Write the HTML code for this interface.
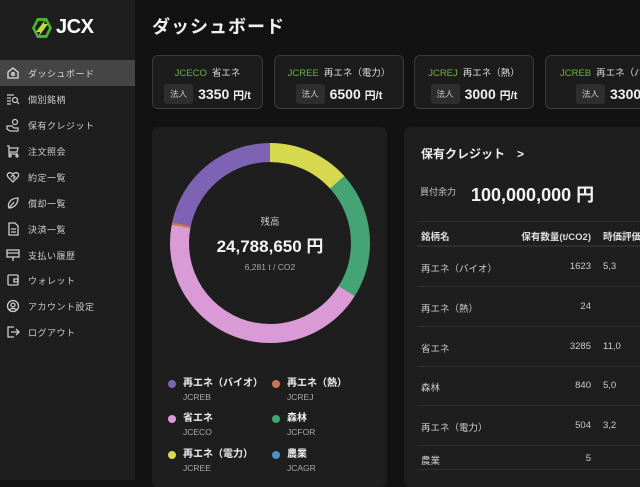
<!DOCTYPE html>
<html><head><meta charset="utf-8"><style>
*{margin:0;padding:0;box-sizing:border-box}
body{width:640px;height:480px;overflow:hidden;background:#121212;font-family:"Liberation Sans","Noto Sans CJK JP",sans-serif;color:#e6e6e6;position:relative}
.side{position:absolute;left:0;top:0;width:135px;height:480px;background:#1e1e1e}
.logo{position:absolute;left:31px;top:16px;display:flex;align-items:center}
.logo span{font-size:20px;font-weight:bold;color:#fff;margin-left:3px;letter-spacing:-0.5px}
.item{position:absolute;left:0;width:135px;height:26px;display:flex;align-items:center;font-size:9px;color:#ccc;letter-spacing:0.5px}
.item svg{position:absolute;left:6px}
.item span{position:absolute;left:28px}
.item.act{background:#454545;color:#ddd}
h1{position:absolute;left:152px;top:13px;font-size:18px;font-weight:bold;color:#f0f0f0;letter-spacing:1px}
.pc{position:absolute;top:55px;height:54px;border:1px solid #3a3a3a;border-radius:6px;background:#1c1c1c;text-align:center}
.pc .t{margin-top:9px;font-size:9.5px;color:#ddd}
.pc .t b{color:#6cb33f;font-weight:normal;margin-right:5px}
.pc .p{margin-top:5px;display:flex;justify-content:center;align-items:center}
.pc .p i{font-style:normal;background:#2e2e2e;font-size:8.5px;color:#ccc;padding:4px 6px;border-radius:3px;margin-right:5px}
.pc .p em{font-style:normal;font-size:14px;font-weight:bold;color:#f0f0f0}
.pc .p em small{font-size:11px}
.card{position:absolute;background:#1e1e1e;border-radius:6px}
.lg{position:absolute;font-size:10px;font-weight:bold;color:#eee}
.lg small{display:block;font-weight:normal;font-size:8.5px;color:#aaa;margin-top:3px}
.lg:before{content:"";position:absolute;left-15px;top:6px;width:8px;height:8px;border-radius:50%;background:var(--c)}
.lg:before{left:-15px}
.row{position:absolute;left:417px;width:230px;border-top:1px solid #2e2e2e;font-size:9.5px;color:#ccc}
.row .a{position:absolute;left:4px}
.row .b{position:absolute;right:56px}
.row .c{position:absolute;left:186px}
</style></head><body>
<div class="side">
 <div class="logo"><svg width="22" height="22" viewBox="0 0 22 22"><polygon points="6,1 16,1 21,11 16,21 6,21 1,11" fill="#4caf3a"/><polygon points="7.5,4 14.5,4 18,11 14.5,18 7.5,18 4,11" fill="#1e1e1e"/><polygon points="14,3 5,15 9,15 8,19 17,7 13,7" fill="#b8e03a"/></svg><span>JCX</span></div>
 <div class="item act" style="top:60px"><svg width="14" height="14" viewBox="0 0 14 14" fill="none" stroke="#ddd" stroke-width="1.3"><path d="M2 6L7 2L12 6V12H2Z"/><circle cx="7" cy="8" r="1.3"/></svg><span>ダッシュボード</span></div>
 <div class="item" style="top:86px"><svg width="14" height="14" viewBox="0 0 14 14" fill="none" stroke="#ccc" stroke-width="1.2"><path d="M1 3H8M1 6H5M1 9H5M1 12H5"/><circle cx="9" cy="8" r="2.5"/><path d="M11 10L13 12"/></svg><span>個別銘柄</span></div>
 <div class="item" style="top:112px"><svg width="14" height="14" viewBox="0 0 14 14" fill="none" stroke="#ccc" stroke-width="1.2"><circle cx="9" cy="4" r="2.5"/><path d="M1 8H6L8 10H12V13H4L1 11Z"/></svg><span>保有クレジット</span></div>
 <div class="item" style="top:138px"><svg width="14" height="14" viewBox="0 0 14 14" fill="none" stroke="#ccc" stroke-width="1.3"><path d="M1 2H3V10H12M3 4H12L11 8H3"/><circle cx="4" cy="12" r="1"/><circle cx="11" cy="12" r="1"/></svg><span>注文照会</span></div>
 <div class="item" style="top:164px"><svg width="14" height="14" viewBox="0 0 14 14" fill="none" stroke="#ccc" stroke-width="1.3"><path d="M7 12L2 7C0 4 3 1 7 4C11 1 14 4 12 7Z"/><path d="M5 7L7 5L9 7L7 9"/></svg><span>約定一覧</span></div>
 <div class="item" style="top:190px"><svg width="14" height="14" viewBox="0 0 14 14" fill="none" stroke="#ccc" stroke-width="1.3"><path d="M3 12C1 7 5 2 12 2C12 9 7 12 3 12ZM3 12L8 6"/></svg><span>償却一覧</span></div>
 <div class="item" style="top:216px"><svg width="14" height="14" viewBox="0 0 14 14" fill="none" stroke="#ccc" stroke-width="1.3"><path d="M3 1H9L12 4V13H3Z"/><path d="M5 7H10M5 10H10"/></svg><span>決済一覧</span></div>
 <div class="item" style="top:242px"><svg width="14" height="14" viewBox="0 0 14 14" fill="none" stroke="#ccc" stroke-width="1.3"><rect x="1" y="2" width="12" height="7"/><path d="M1 5H13M7 9V13"/></svg><span>支払い履歴</span></div>
 <div class="item" style="top:267px"><svg width="14" height="14" viewBox="0 0 14 14" fill="none" stroke="#ccc" stroke-width="1.3"><rect x="2" y="2" width="10" height="10" rx="1"/><path d="M8 6H12V9H8Z"/></svg><span>ウォレット</span></div>
 <div class="item" style="top:293px"><svg width="14" height="14" viewBox="0 0 14 14" fill="none" stroke="#ccc" stroke-width="1.3"><circle cx="7" cy="7" r="5.5"/><circle cx="7" cy="6" r="2"/><path d="M3.5 11C5 9 9 9 10.5 11"/></svg><span>アカウント設定</span></div>
 <div class="item" style="top:319px"><svg width="14" height="14" viewBox="0 0 14 14" fill="none" stroke="#ccc" stroke-width="1.3"><path d="M8 2H2V12H8M5 7H13M10 4L13 7L10 10"/></svg><span>ログアウト</span></div>
</div>
<h1>ダッシュボード</h1>
<div class="pc" style="left:152px;width:111px"><div class="t"><b>JCECO</b>省エネ</div><div class="p"><i>法人</i><em>3350 <small>円/t</small></em></div></div>
<div class="pc" style="left:274px;width:130px"><div class="t"><b>JCREE</b>再エネ（電力）</div><div class="p"><i>法人</i><em>6500 <small>円/t</small></em></div></div>
<div class="pc" style="left:414px;width:120px"><div class="t"><b>JCREJ</b>再エネ（熱）</div><div class="p"><i>法人</i><em>3000 <small>円/t</small></em></div></div>
<div class="pc" style="left:545px;width:130px;text-align:left"><div class="t" style="padding-left:14px"><b>JCREB</b>再エネ（バイオ）</div><div class="p" style="justify-content:flex-start;padding-left:30px"><i>法人</i><em>3300 <small>円/t</small></em></div></div>

<div class="card" style="left:152px;top:127px;width:235px;height:360px"></div>
<svg style="position:absolute;left:170px;top:143px" width="200" height="200" viewBox="0 0 200 200">
<g fill="none" stroke-width="19" transform="rotate(-90 100 100)">
<circle cx="100" cy="100" r="90.5" stroke="#d6d94e" stroke-dasharray="75.8 600" stroke-dashoffset="0"/>
<circle cx="100" cy="100" r="90.5" stroke="#45a474" stroke-dasharray="116.9 600" stroke-dashoffset="-75.8"/>
<circle cx="100" cy="100" r="90.5" stroke="#d99ad6" stroke-dasharray="250.4 600" stroke-dashoffset="-192.7"/>
<circle cx="100" cy="100" r="90.5" stroke="#c87650" stroke-dasharray="2.4 600" stroke-dashoffset="-443.1"/>
<circle cx="100" cy="100" r="90.5" stroke="#7e63b5" stroke-dasharray="123.1 600" stroke-dashoffset="-445.5"/>
</g></svg>
<div style="position:absolute;left:170px;top:214px;width:200px;text-align:center;font-size:9.5px;color:#ccc">残高</div>
<div style="position:absolute;left:170px;top:232px;width:200px;text-align:center;font-size:17px;font-weight:bold;color:#f3f3f3">24,788,650 円</div>
<div style="position:absolute;left:170px;top:262px;width:200px;text-align:center;font-size:8.5px;color:#aaa">6,281 t / CO2</div>
<div class="lg" style="left:183px;top:374px;--c:#7e63b5">再エネ（バイオ）<small>JCREB</small></div>
<div class="lg" style="left:287px;top:374px;--c:#c87650">再エネ（熱）<small>JCREJ</small></div>
<div class="lg" style="left:183px;top:409px;--c:#d99ad6">省エネ<small>JCECO</small></div>
<div class="lg" style="left:287px;top:409px;--c:#45a474">森林<small>JCFOR</small></div>
<div class="lg" style="left:183px;top:445px;--c:#d6d94e">再エネ（電力）<small>JCREE</small></div>
<div class="lg" style="left:287px;top:445px;--c:#4f8ec8">農業<small>JCAGR</small></div>

<div class="card" style="left:404px;top:127px;width:260px;height:360px"></div>
<div style="position:absolute;left:421px;top:145px;font-size:12px;font-weight:bold;color:#eee">保有クレジット　&gt;</div>
<div style="position:absolute;left:420px;top:185px;font-size:9px;color:#ccc">買付余力</div>
<div style="position:absolute;left:471px;top:181px;font-size:18px;font-weight:bold;color:#f3f3f3">100,000,000 円</div>
<div class="row" style="top:221px;height:25px;font-weight:bold;color:#ddd;border-bottom:1px solid #2e2e2e"><span class="a" style="top:7px">銘柄名</span><span class="b" style="top:7px">保有数量(t/CO2)</span><span class="c" style="top:7px">時価評価</span></div>
<div class="row" style="top:246px;height:40px"><span class="a" style="top:14px">再エネ（バイオ）</span><span class="b" style="top:14px">1623</span><span class="c" style="top:14px">5,3</span></div>
<div class="row" style="top:286px;height:40px"><span class="a" style="top:14px">再エネ（熱）</span><span class="b" style="top:14px">24</span></div>
<div class="row" style="top:326px;height:40px"><span class="a" style="top:14px">省エネ</span><span class="b" style="top:14px">3285</span><span class="c" style="top:14px">11,0</span></div>
<div class="row" style="top:366px;height:39px"><span class="a" style="top:13px">森林</span><span class="b" style="top:13px">840</span><span class="c" style="top:13px">5,0</span></div>
<div class="row" style="top:405px;height:40px"><span class="a" style="top:14px">再エネ（電力）</span><span class="b" style="top:14px">504</span><span class="c" style="top:14px">3,2</span></div>
<div class="row" style="top:445px;height:25px;border-bottom:1px solid #2e2e2e"><span class="a" style="top:7px">農業</span><span class="b" style="top:7px">5</span></div>
</body></html>
